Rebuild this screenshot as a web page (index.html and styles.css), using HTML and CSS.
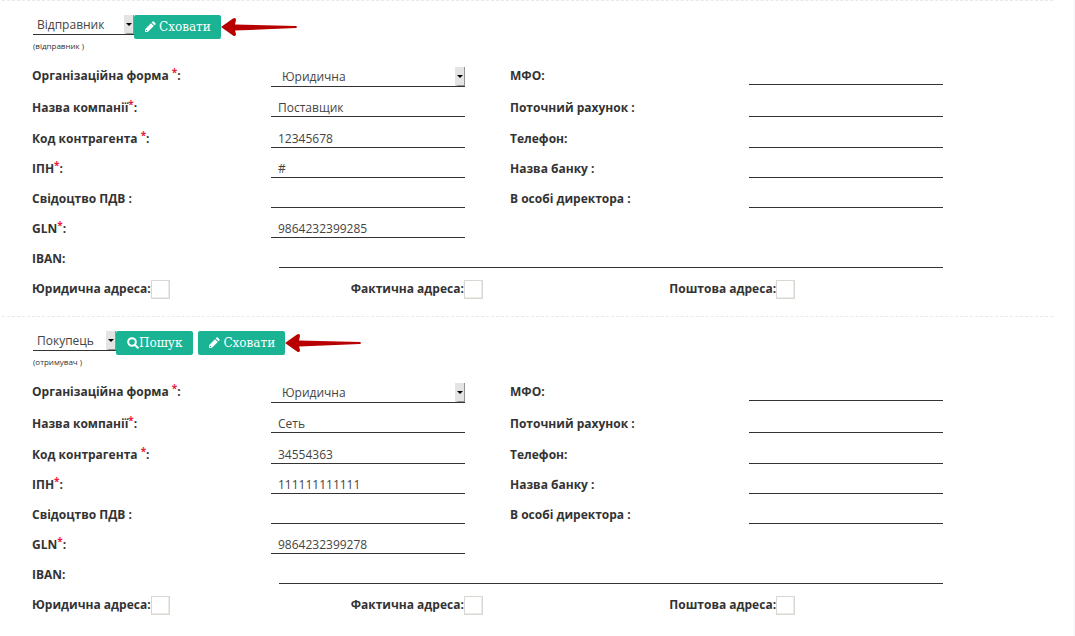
FILE: index.html
```html
<!DOCTYPE html>
<html lang="uk">
<head>
<meta charset="utf-8">
<title>Контрагенти</title>
<link rel="stylesheet" href="styles.css">
</head>
<body>
<svg class="sprite" aria-hidden="true">
  <symbol id="pencil" viewBox="0 0 12 12"><path d="M1 8.2 7 2.2 9.8 5 3.8 11H1z M7.7 1.5 8.6.6Q9.2.1 9.8.6L11.4 2.2Q11.9 2.8 11.4 3.4L10.5 4.3z"/><path d="M1.9 8.9 3.1 10.1" class="notch"/></symbol>
  <symbol id="search" viewBox="0 0 12 12"><circle cx="5" cy="5" r="3.8"/><path d="M7.8 7.8 10.8 10.8"/></symbol>
  <symbol id="caret" viewBox="0 0 10 19"><path fill="#e4e4e2" d="M0 0h10v19H0z"/><path fill="#949494" d="M9 0h1v19H1l2-1h6z"/><path d="M2 8h6L5 11z"/></symbol>
  <symbol id="arrow" viewBox="0 0 78 20"><path fill="#b80000" d="M0 10 12 1.5Q15 0 15 3L14 7.5 75 9Q77 10 75 11L14 13.5 15 17Q15 20 12 18.5z"/></symbol>
</svg>
<main class="page">
  <section class="party">
    <div class="head">
      <div class="pick role-wide"><select aria-label="Роль"><option>Відправник</option></select><svg class="caret"><use href="#caret"/></svg></div>
      <button class="btn" type="button"><svg class="icon"><use href="#pencil"/></svg><span>Сховати</span></button>
      <svg class="arrow" aria-hidden="true"><use href="#arrow"/></svg>
    </div>
    <p class="note">(відправник )</p>
    <div class="grid">
      <label for="a1">Організаційна форма <sup>*</sup>:</label>
      <div class="pick form"><select id="a1"><option>Юридична</option></select><svg class="caret"><use href="#caret"/></svg></div>
      <label for="a2">МФО:</label><input id="a2" class="field" type="text">
      <label for="a3">Назва компанії<sup>*</sup>:</label><input id="a3" class="field" type="text" value="Поставщик">
      <label for="a4">Поточний рахунок :</label><input id="a4" class="field" type="text">
      <label for="a5">Код контрагента <sup>*</sup>:</label><input id="a5" class="field" type="text" value="12345678">
      <label for="a6">Телефон:</label><input id="a6" class="field" type="text">
      <label for="a7">ІПН<sup>*</sup>:</label><input id="a7" class="field" type="text" value="#">
      <label for="a8">Назва банку :</label><input id="a8" class="field" type="text">
      <label for="a9">Свідоцтво ПДВ :</label><input id="a9" class="field" type="text">
      <label for="a10">В особі директора :</label><input id="a10" class="field" type="text">
      <label for="a11">GLN<sup>*</sup>:</label><input id="a11" class="field" type="text" value="9864232399285">
      <label class="first" for="a12">IBAN:</label><div class="long"><input id="a12" class="field" type="text"></div>
    </div>
    <div class="addresses">
      <div class="check"><label for="a13">Юридична адреса:</label><input id="a13" type="checkbox"></div>
      <div class="check"><label for="a14">Фактична адреса:</label><input id="a14" type="checkbox"></div>
      <div class="check"><label for="a15">Поштова адреса:</label><input id="a15" type="checkbox"></div>
    </div>
  </section>
  <section class="party">
    <div class="head">
      <div class="pick role"><select aria-label="Роль"><option>Покупець</option></select><svg class="caret"><use href="#caret"/></svg></div>
      <button class="btn find" type="button"><svg class="icon line"><use href="#search"/></svg><span>Пошук</span></button>
      <button class="btn" type="button"><svg class="icon"><use href="#pencil"/></svg><span>Сховати</span></button>
      <svg class="arrow" aria-hidden="true"><use href="#arrow"/></svg>
    </div>
    <p class="note">(отримувач )</p>
    <div class="grid">
      <label for="b1">Організаційна форма <sup>*</sup>:</label>
      <div class="pick form"><select id="b1"><option>Юридична</option></select><svg class="caret"><use href="#caret"/></svg></div>
      <label for="b2">МФО:</label><input id="b2" class="field" type="text">
      <label for="b3">Назва компанії<sup>*</sup>:</label><input id="b3" class="field" type="text" value="Сеть">
      <label for="b4">Поточний рахунок :</label><input id="b4" class="field" type="text">
      <label for="b5">Код контрагента <sup>*</sup>:</label><input id="b5" class="field" type="text" value="34554363">
      <label for="b6">Телефон:</label><input id="b6" class="field" type="text">
      <label for="b7">ІПН<sup>*</sup>:</label><input id="b7" class="field" type="text" value="111111111111">
      <label for="b8">Назва банку :</label><input id="b8" class="field" type="text">
      <label for="b9">Свідоцтво ПДВ :</label><input id="b9" class="field" type="text">
      <label for="b10">В особі директора :</label><input id="b10" class="field" type="text">
      <label for="b11">GLN<sup>*</sup>:</label><input id="b11" class="field" type="text" value="9864232399278">
      <label class="first" for="b12">IBAN:</label><div class="long"><input id="b12" class="field" type="text"></div>
    </div>
    <div class="addresses">
      <div class="check"><label for="b13">Юридична адреса:</label><input id="b13" type="checkbox"></div>
      <div class="check"><label for="b14">Фактична адреса:</label><input id="b14" type="checkbox"></div>
      <div class="check"><label for="b15">Поштова адреса:</label><input id="b15" type="checkbox"></div>
    </div>
  </section>
</main>
</body>
</html>
```

FILE: styles.css
```css
* { box-sizing: border-box; }
body {
  margin: 0;
  background: #fff;
  color: #333;
  font: 12px/18px "Open Sans", "Noto Sans", sans-serif;
}
.sprite { display: none; }
.page {
  min-height: 100vh;
  padding: 0 20px 0 2px;
  border-right: 2px solid #f9f9fb;
}
.party {
  padding: 14px 65px 12px 30px;
  border-top: 1px dashed #e7eaec;
}
.head { display: flex; align-items: flex-start; height: 24px; padding-left: 1px; }
.pick {
  position: relative;
  height: 20px;
  border-bottom: 1px solid #333;
}
.role-wide { width: 101px; }
.role { width: 83px; }
.pick select {
  appearance: none;
  display: block;
  width: 100%;
  height: 19px;
  padding: 0 12px 0 4px;
  border: 0;
  background: none;
  color: #444;
  font: inherit;
}
.form select { padding-left: 11px; }
.caret {
  position: absolute;
  top: 0;
  right: 0;
  width: 10px;
  height: 19px;
  pointer-events: none;
}
.btn {
  display: flex;
  align-items: center;
  gap: 3px;
  height: 24px;
  padding: 0 10px;
  border: 0;
  border-radius: 2px;
  background: #1ab394;
  color: #fff;
  font: 12px/18px "DejaVu Serif", serif;
}
.find { gap: 0; margin-right: 5px; padding: 0 11px; }
.icon { width: 12px; height: 12px; fill: #fff; }
.notch { stroke: #1ab394; stroke-width: 1; }
.line { fill: none; stroke: #fff; stroke-width: 2; stroke-linecap: round; }
.arrow { width: 78px; height: 20px; margin-top: 2px; }
.note {
  margin: 0;
  height: 22px;
  padding: 2px 0 0 1px;
  font-size: 8px;
  line-height: 10px;
}
.grid {
  display: grid;
  grid-template-columns: repeat(4, 1fr);
  grid-template-rows: 32px 31px;
  grid-auto-rows: 30px;
  align-items: start;
}
label { padding-top: 6px; font-weight: 700; white-space: nowrap; }
.grid label { height: 30px; }
sup { color: #ed1c3c; font-size: 10px; line-height: 0; vertical-align: 4px; }
.form { width: 81%; height: 20px; margin-top: 6px; }
.field {
  width: 81%;
  height: 24px;
  padding: 5px 7px 0;
  border: 0;
  border-bottom: 1px solid #333;
  background: none;
  color: #444;
  font: inherit;
}
.first { grid-column: 1; }
.long { grid-column: 2 / 5; padding: 0 45px 0 8px; }
.long .field { width: 100%; }
.addresses { display: grid; grid-template-columns: repeat(3, 1fr); height: 30px; }
.check { display: flex; align-items: flex-start; }
.check input {
  appearance: none;
  width: 19px;
  height: 19px;
  margin: 6px 0 0;
  border: 1px solid #d9d7d1;
  background: #fff;
  box-shadow: inset -1px -1px #edebe7;
}
```
